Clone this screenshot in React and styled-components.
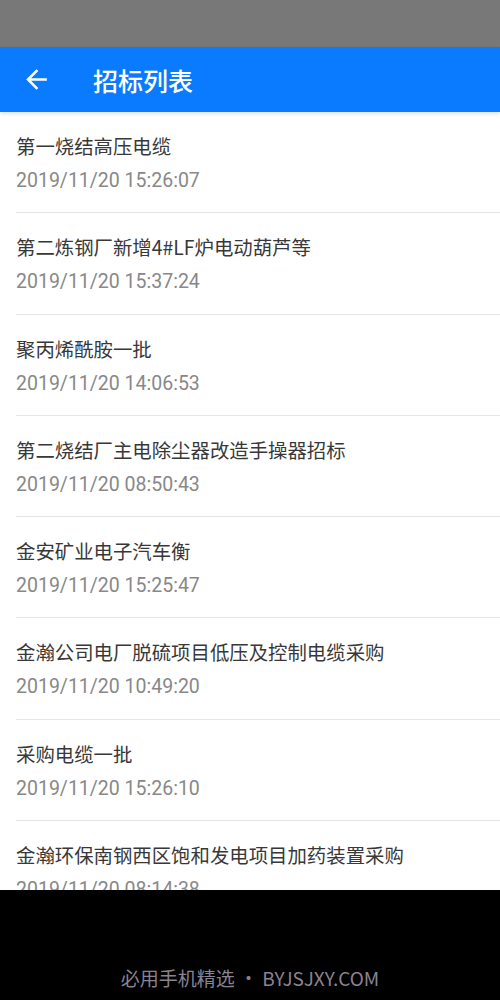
import React from "react";
import styled, { createGlobalStyle } from "styled-components";

const GlobalStyle = createGlobalStyle`
  body {
    margin: 0;
    background: #fff;
    font-family: "Noto Sans CJK SC", "Noto Sans", sans-serif;
  }
`;

const PAGE = styled.div`
  width: 500px;
  height: 1000px;
  display: flex;
  flex-direction: column;
  overflow: hidden;
  background: #fff;
`;

const STATUSBAR = styled.div`
  height: 47px;
  flex-shrink: 0;
  background: #787878;
`;

const HEADER = styled.div`
  position: relative;
  z-index: 1;
  height: 65px;
  flex-shrink: 0;
  display: flex;
  align-items: center;
  padding-left: 20px;
  background: #0a7bff;
  box-shadow: 0 2px 4px rgba(0, 0, 0, 0.12);
`;

const BACK = styled.button`
  width: 32px;
  height: 32px;
  padding: 0;
  margin-right: 41px;
  border: none;
  background: transparent;
  display: flex;
  align-items: center;
  justify-content: center;
  cursor: pointer;
`;

const TITLE = styled.h1`
  margin: 0;
  color: #fff;
  font-size: 25px;
  font-weight: 500;
  line-height: 32px;
`;

const LIST = styled.div`
  flex: 1;
  overflow: hidden;
`;

const ITEM = styled.div`
  margin-left: 16px;
  padding: 21px 0 18.3px;
  border-bottom: 1px solid #e6e6e6;
  display: flex;
  flex-direction: column;
  gap: 9px;
`;

const NAME = styled.div`
  color: #383838;
  font-size: 19.4px;
  line-height: 26px;
  white-space: nowrap;
`;

const TIME = styled.div`
  color: #888;
  font-family: Roboto, "Noto Sans", sans-serif;
  font-size: 19.5px;
  line-height: 26px;
`;

const FOOTER = styled.div`
  height: 110px;
  flex-shrink: 0;
  display: flex;
  align-items: flex-end;
  justify-content: center;
  padding-bottom: 9px;
  box-sizing: border-box;
  background: #000;
  color: #8a8390;
  font-size: 19px;
  line-height: 26px;
`;

const items = [
  ["第一烧结高压电缆", "2019/11/20 15:26:07"],
  ["第二炼钢厂新增4#LF炉电动葫芦等", "2019/11/20 15:37:24"],
  ["聚丙烯酰胺一批", "2019/11/20 14:06:53"],
  ["第二烧结厂主电除尘器改造手操器招标", "2019/11/20 08:50:43"],
  ["金安矿业电子汽车衡", "2019/11/20 15:25:47"],
  ["金瀚公司电厂脱硫项目低压及控制电缆采购", "2019/11/20 10:49:20"],
  ["采购电缆一批", "2019/11/20 15:26:10"],
  ["金瀚环保南钢西区饱和发电项目加药装置采购", "2019/11/20 08:14:38"]
];

function BackArrow() {
  return (
    <svg width='31' height='31' viewBox='0 0 24 24' fill='#fff'>
      <path d='M20 11H7.83l5.59-5.59L12 4l-8 8 8 8 1.41-1.41L7.83 13H20v-2z' />
    </svg>
  );
}

export default function App() {
  return (
    <>
      <GlobalStyle />
      <PAGE>
        <STATUSBAR />
        <HEADER>
          <BACK aria-label='返回'>
            <BackArrow />
          </BACK>
          <TITLE>招标列表</TITLE>
        </HEADER>
        <LIST>
          {items.map(([name, time]) => (
            <ITEM key={name}>
              <NAME>{name}</NAME>
              <TIME>{time}</TIME>
            </ITEM>
          ))}
        </LIST>
        <FOOTER>必用手机精选 • BYJSJXY.COM</FOOTER>
      </PAGE>
    </>
  );
}
